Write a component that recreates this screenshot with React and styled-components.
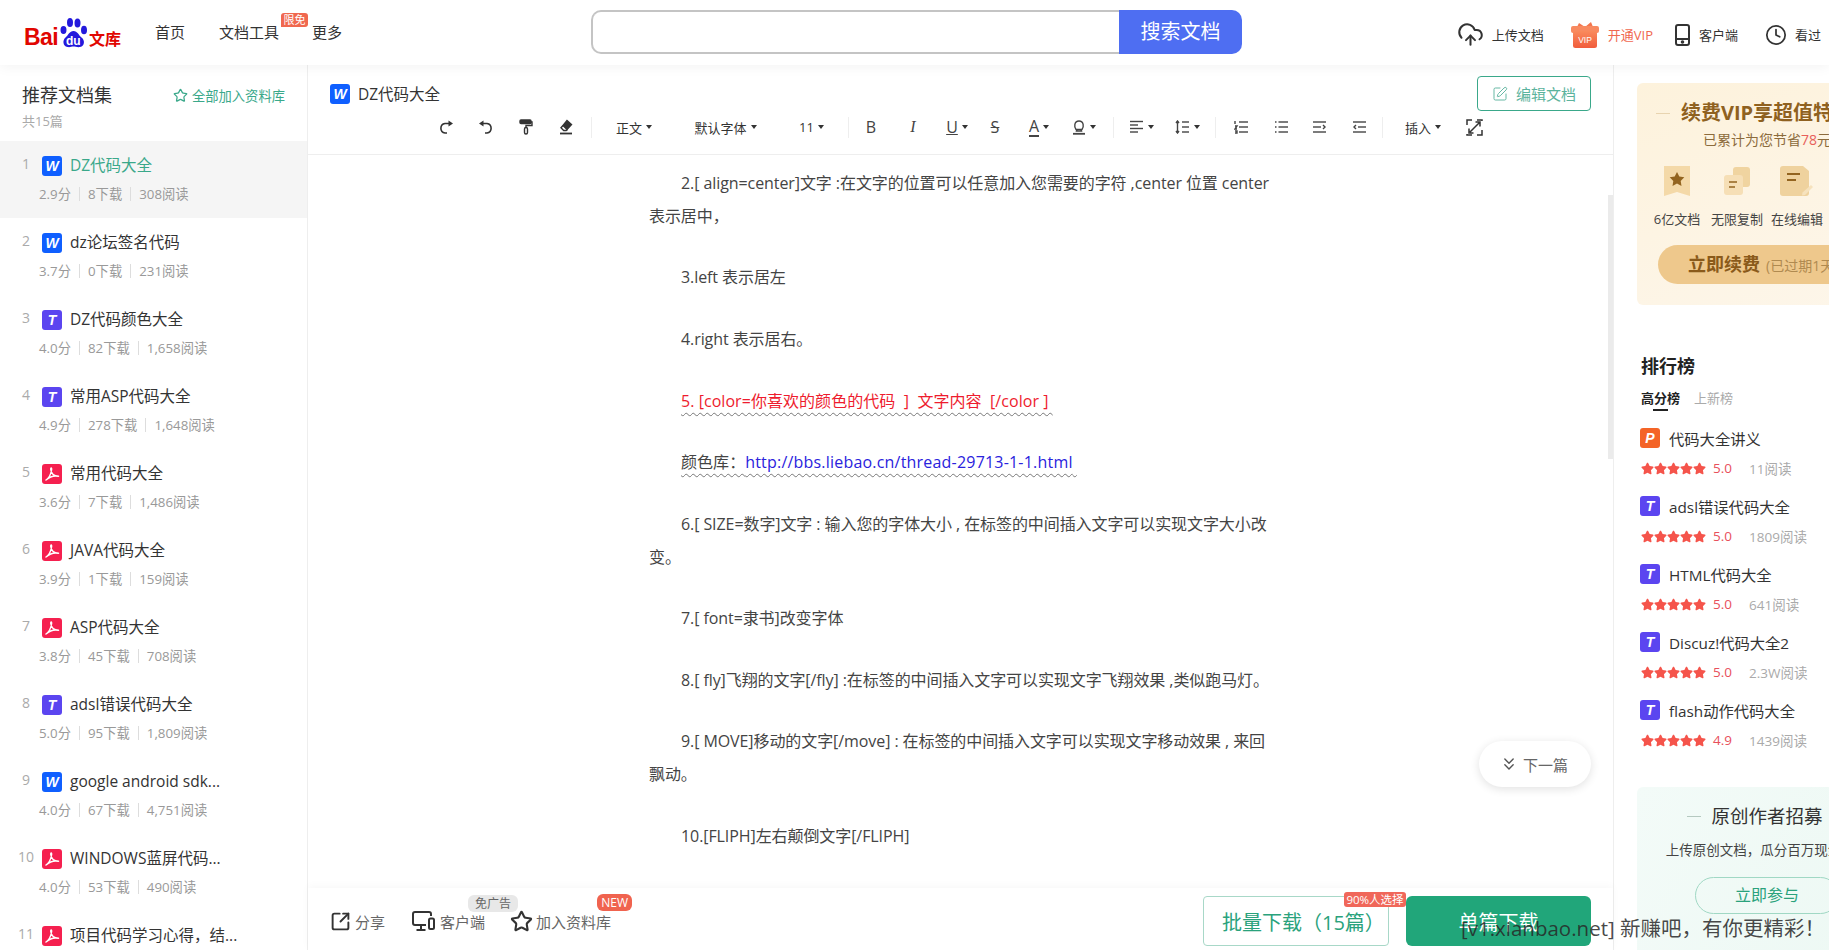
import React from "react";
import styled, { createGlobalStyle } from "styled-components";
import { ChevronsDown, Clock, CloudUpload, SquareArrowOutUpRight, SquarePen, Star } from "lucide-react";
import { FaStar } from "react-icons/fa";

const FONT = `"Open Sans", "Noto Sans CJK SC", sans-serif`;

const GlobalStyle = createGlobalStyle`
  html, body {
    margin: 0;
    padding: 0;
    background: #fff;
    overflow: hidden;
  }
  body {
    font-family: ${FONT};
    color: #333;
  }
`;

const Page = styled.div`
  position: relative;
  width: 1829px;
  height: 950px;
  display: flex;
  flex-direction: column;
  overflow: hidden;
`;

/* ---------- top header ---------- */

const Header = styled.header`
  height: 65px;
  flex-shrink: 0;
  box-sizing: border-box;
  padding-bottom: 2px;
  display: flex;
  align-items: center;
  position: relative;
  z-index: 2;
  background: #fff;
  box-shadow: 0 2px 12px rgba(0, 0, 0, 0.05);
`;

const HeaderLeft = styled.div`
  width: 591px;
  flex-shrink: 0;
  display: flex;
  align-items: center;
  padding-left: 24px;
  box-sizing: border-box;
`;

const Logo = styled.div`
  width: 131px;
  height: 34px;
  display: flex;
  align-items: flex-end;
`;

const LogoLatin = styled.span`
  font-family: "Liberation Sans", sans-serif;
  font-weight: 700;
  font-size: 23px;
  line-height: 23px;
  color: #e10601;
  letter-spacing: -0.6px;
`;

const LogoCjk = styled.span`
  font-weight: 700;
  font-size: 16px;
  line-height: 20px;
  color: #e10601;
  margin-left: 1px;
`;

const PawWrap = styled.span`
  position: relative;
  width: 29px;
  height: 32px;
  margin-left: 1px;
`;

const PawText = styled.span`
  position: absolute;
  left: 7px;
  bottom: 2px;
  font-family: "Liberation Sans", sans-serif;
  font-weight: 700;
  font-size: 12px;
  line-height: 12px;
  color: #fff;
`;

const Nav = styled.nav`
  display: flex;
  align-items: center;
`;

const NavLink = styled.a`
  position: relative;
  font-size: 15px;
  color: #333;
  margin-right: ${(p) => p.$gap}px;
`;

const LimitBadge = styled.span`
  position: absolute;
  top: -8px;
  right: -29px;
  width: 27px;
  height: 14px;
  border-radius: 3px 3px 3px 0;
  background: #f0684f;
  color: #fff;
  font-size: 11px;
  line-height: 14px;
  text-align: center;
`;

const SearchBox = styled.div`
  width: 651px;
  height: 44px;
  flex-shrink: 0;
  display: flex;
  box-sizing: border-box;
`;

const SearchInput = styled.div`
  flex: 1;
  border: 2px solid #c4c4c4;
  border-right: 0;
  border-radius: 10px 0 0 10px;
`;

const SearchButton = styled.div`
  width: 123px;
  background: #4e6ef2;
  color: #fff;
  font-size: 20px;
  line-height: 44px;
  text-align: center;
  border-radius: 0 10px 10px 0;
`;

const HeaderRight = styled.div`
  margin-left: auto;
  display: flex;
  align-items: center;
  padding: 6px 8px 0 0;
`;

const HeaderAction = styled.a`
  display: flex;
  align-items: center;
  gap: ${(p) => p.$gap}px;
  margin-left: ${(p) => p.$left}px;
  font-size: 13px;
  color: ${(p) => p.$color || "#333"};
`;

/* ---------- body columns ---------- */

const Columns = styled.div`
  flex: 1;
  min-height: 0;
  display: flex;
`;

const Sidebar = styled.aside`
  width: 308px;
  flex-shrink: 0;
  box-sizing: border-box;
  border-right: 1px solid #eee;
  overflow: hidden;
`;

const SidebarHead = styled.div`
  padding: 18px 22px 11px;
`;

const SidebarTop = styled.div`
  display: flex;
  align-items: center;
  justify-content: space-between;
`;

const SidebarTitle = styled.h2`
  margin: 0;
  font-size: 18px;
  line-height: 24px;
  font-weight: 400;
  color: #333;
`;

const AddAll = styled.a`
  display: flex;
  align-items: center;
  gap: 4px;
  font-size: 13.3px;
  color: #3aa88a;
`;

const Count = styled.div`
  margin-top: 5px;
  font-size: 13px;
  line-height: 18px;
  color: #aaa;
`;

const DocRow = styled.div`
  height: 77px;
  box-sizing: border-box;
  padding-top: 15px;
  background: ${(p) => (p.$active ? "#f5f5f5" : "transparent")};
`;

const DocTitleRow = styled.div`
  display: flex;
  align-items: center;
  height: 20px;
  padding-left: 10px;
`;

const DocNum = styled.span`
  width: 32px;
  text-align: center;
  font-size: 14px;
  line-height: 16px;
  margin-top: -4px;
  color: #aaa;
`;

const DocName = styled.span`
  margin: -3px 0 0 8px;
  font-size: 15.5px;
  white-space: nowrap;
  color: ${(p) => (p.$active ? "#3aa88a" : "#333")};
`;

const DocMeta = styled.div`
  display: flex;
  align-items: center;
  gap: 8px;
  margin-top: 9px;
  padding-left: 39px;
  font-size: 13.3px;
  line-height: 18px;
  color: #999;
`;

const MetaSep = styled.i`
  width: 1px;
  height: 14px;
  background: #ddd;
`;

const FileBadge = styled.span`
  width: 20px;
  height: 20px;
  flex-shrink: 0;
  border-radius: 3px;
  background: ${(p) => p.$bg};
  color: #fff;
  display: flex;
  align-items: center;
  justify-content: center;
  font-family: "Liberation Sans", sans-serif;
  font-style: italic;
  font-weight: 700;
  font-size: 14px;
`;

/* ---------- main doc column ---------- */

const Main = styled.main`
  flex: 1;
  min-width: 0;
  display: flex;
  flex-direction: column;
  position: relative;
  border-right: 1px solid #eee;
`;

const MainHead = styled.div`
  height: 90px;
  flex-shrink: 0;
  box-sizing: border-box;
  padding-top: 11px;
  border-bottom: 1px solid #eee;
`;

const TitleBar = styled.div`
  height: 35px;
  display: flex;
  align-items: center;
  padding: 0 22px;
  gap: 8px;
  font-size: 15.5px;
  color: #333;
`;

const EditButton = styled.a`
  margin-left: auto;
  width: 114px;
  height: 35px;
  box-sizing: border-box;
  border: 1px solid #3aa88a;
  border-radius: 4px;
  display: flex;
  align-items: center;
  justify-content: center;
  gap: 8px;
  font-size: 15px;
  color: #5bb39d;
`;

const Toolbar = styled.div`
  height: 32px;
  display: flex;
  align-items: center;
  justify-content: center;
  padding-right: 10px;
`;

const Tool = styled.span`
  width: ${(p) => p.$w}px;
  height: 24px;
  flex-shrink: 0;
  display: flex;
  align-items: center;
  justify-content: center;
  gap: 4px;
  font-size: 13px;
  color: #333;
`;

const ToolSep = styled.i`
  width: 1px;
  height: 21px;
  flex-shrink: 0;
  background: #eee;
  margin-left: ${(p) => p.$m || 0}px;
`;

const Caret = styled.i`
  width: 0;
  height: 0;
  border-left: 3.5px solid transparent;
  border-right: 3.5px solid transparent;
  border-top: 4px solid #333;
`;

const Glyph = styled.span`
  font-family: ${(p) => p.$font || `"Open Sans", sans-serif`};
  font-style: ${(p) => (p.$italic ? "italic" : "normal")};
  font-size: 16px;
  line-height: 18px;
  color: #444;
  text-decoration: ${(p) => p.$deco || "none"};
  border-bottom: ${(p) => (p.$bar ? "2px solid #444" : "0")};
`;

const Reader = styled.div`
  flex: 1;
  min-height: 0;
  overflow: hidden;
  position: relative;
`;

const Article = styled.article`
  width: 630px;
  margin-left: 341px;
  padding-top: 12px;
  font-size: 16px;
  line-height: 32.8px;
  letter-spacing: -0.08px;
  color: #444;
`;

const Para = styled.p`
  margin: 0 0 28.8px;
  text-indent: 32px;
  white-space: pre;
`;

const Wavy = styled.span`
  text-decoration: underline wavy #777 1px;
  text-underline-offset: 5px;
  letter-spacing: 0.05px;
  color: ${(p) => p.$color || "inherit"};
`;

const LinkText = styled.span`
  color: #2a22dd;
  letter-spacing: 0.2px;
`;

const ScrollThumb = styled.i`
  position: absolute;
  top: 40px;
  right: 0;
  width: 5px;
  height: 264px;
  background: #ebebeb;
`;

const NextPill = styled.a`
  position: absolute;
  right: 22px;
  bottom: 101px;
  width: 112px;
  height: 46px;
  box-sizing: border-box;
  padding-right: 3px;
  border-radius: 23px;
  background: #fff;
  box-shadow: 0 2px 10px rgba(0, 0, 0, 0.12);
  display: flex;
  align-items: center;
  justify-content: center;
  gap: 4px;
  font-size: 15px;
  color: #666;
`;

const BottomBar = styled.div`
  height: 62px;
  flex-shrink: 0;
  display: flex;
  align-items: center;
  padding: 4px 22px 0;
  box-sizing: border-box;
  background: #fff;
  box-shadow: 0 -2px 8px rgba(0, 0, 0, 0.03);
  position: relative;
`;

const BarAction = styled.a`
  position: relative;
  display: flex;
  align-items: center;
  gap: ${(p) => p.$gap}px;
  margin-right: ${(p) => p.$right}px;
  font-size: 15px;
  color: #666;
`;

const BarBadge = styled.span`
  position: absolute;
  top: -16px;
  right: ${(p) => p.$right}px;
  height: 17px;
  padding: 0 ${(p) => p.$pad}px;
  border-radius: 6px;
  background: ${(p) => p.$bg};
  color: ${(p) => p.$color};
  font-size: 12px;
  line-height: 17px;
  white-space: nowrap;
`;

const Downloads = styled.div`
  margin-left: auto;
  display: flex;
  gap: 17px;
  position: relative;
`;

const BatchButton = styled.a`
  width: 186px;
  height: 50px;
  box-sizing: border-box;
  border: 1px solid #a8d8c8;
  border-radius: 4px;
  padding-left: 18px;
  color: #2aa27c;
  font-size: 20px;
  line-height: 51px;
  white-space: nowrap;
`;

const SingleButton = styled.a`
  width: 185px;
  height: 50px;
  border-radius: 6px;
  background: #21a67a;
  color: #fff;
  font-size: 20px;
  line-height: 53px;
  text-align: center;
`;

const PickBadge = styled.span`
  position: absolute;
  top: -4px;
  left: 141px;
  width: 62px;
  height: 15px;
  border-radius: 3px;
  background: #f0675a;
  color: #fff;
  font-size: 11.5px;
  line-height: 15px;
  text-align: center;
  white-space: nowrap;
`;

/* ---------- right column ---------- */

const RightCol = styled.aside`
  width: 215px;
  flex-shrink: 0;
  overflow: hidden;
  padding: 18px 0 0 23px;
  box-sizing: border-box;
`;

const PromoCard = styled.section`
  width: 260px;
  height: 222px;
  box-sizing: border-box;
  border-radius: 6px;
  background: linear-gradient(160deg, #fdf2dc, #fdf6ea);
  padding-top: 15px;
  text-align: center;
`;

const PromoTitle = styled.h3`
  margin: 0;
  display: flex;
  align-items: center;
  justify-content: center;
  gap: 11px;
  font-size: 20px;
  line-height: 30px;
  font-weight: 700;
  color: #8f6120;
  white-space: nowrap;
`;

const Dash = styled.i`
  width: 14px;
  height: 1px;
  flex-shrink: 0;
  background: ${(p) => p.$color};
`;

const PromoSub = styled.div`
  margin-top: 2px;
  font-size: 14px;
  line-height: 20px;
  color: #8c6b3c;
  white-space: nowrap;
`;

const Saved = styled.span`
  color: #e8605a;
`;

const Perks = styled.div`
  display: grid;
  grid-template-columns: repeat(4, 60px);
  justify-content: center;
  margin-top: 15px;
`;

const Perk = styled.div`
  display: flex;
  flex-direction: column;
  align-items: center;
  gap: 12px;
  font-size: 13px;
  line-height: 20px;
  color: #444;
  white-space: nowrap;
`;

const RenewButton = styled.a`
  display: block;
  margin: 16px 0 0 21px;
  width: 218px;
  height: 39px;
  border-radius: 20px;
  background: #eec88c;
  text-align: left;
  padding-left: 30px;
  box-sizing: border-box;
  font-size: 18px;
  line-height: 39px;
  font-weight: 700;
  color: #8a5a1a;
  white-space: nowrap;
`;

const RenewNote = styled.span`
  margin-left: 6px;
  font-size: 14px;
  font-weight: 400;
  color: #b08a50;
`;

const Ranking = styled.section`
  padding: 49px 0 0 4px;
`;

const RankTitle = styled.h3`
  margin: 0;
  font-size: 18px;
  line-height: 24px;
  font-weight: 700;
  color: #222;
`;

const RankTabs = styled.div`
  display: flex;
  gap: 14px;
  margin-top: 10px;
  height: 40px;
`;

const RankTab = styled.span`
  position: relative;
  height: 20px;
  font-size: 13px;
  line-height: 20px;
  font-weight: ${(p) => (p.$on ? 700 : 400)};
  color: ${(p) => (p.$on ? "#222" : "#aaa")};
  &::after {
    content: "";
    display: ${(p) => (p.$on ? "block" : "none")};
    position: absolute;
    left: 12px;
    bottom: -3px;
    width: 15px;
    height: 2px;
    background: #222;
  }
`;

const RankItem = styled.div`
  height: 68px;
`;

const RankName = styled.div`
  display: flex;
  align-items: center;
  gap: 9px;
  height: 20px;
  margin-left: -1px;
  font-size: 15.3px;
  color: #333;
  white-space: nowrap;
`;

const RankStats = styled.div`
  display: flex;
  align-items: center;
  margin-top: 11px;
  height: 18px;
  font-size: 13.5px;
  white-space: nowrap;
`;

const Stars = styled.span`
  display: flex;
  width: 72px;
  color: #f5544b;
`;

const Score = styled.span`
  width: 36px;
  color: #e8505b;
`;

const Reads = styled.span`
  color: #aaa;
`;

const AuthorCard = styled.section`
  width: 260px;
  height: 200px;
  margin-top: 19px;
  box-sizing: border-box;
  border-radius: 6px;
  background: linear-gradient(120deg, #f3fbf8, #ecf8f3);
  padding-top: 14px;
  text-align: center;
`;

const AuthorTitle = styled.h3`
  margin: 0;
  display: flex;
  align-items: center;
  justify-content: center;
  gap: 10px;
  font-size: 18.5px;
  line-height: 30px;
  font-weight: 400;
  color: #333;
`;

const AuthorSub = styled.div`
  margin-top: 9px;
  font-size: 13.5px;
  line-height: 20px;
  color: #444;
  white-space: nowrap;
`;

const JoinButton = styled.a`
  display: block;
  margin: 17px auto 0;
  width: 144px;
  height: 37px;
  box-sizing: border-box;
  border: 1px solid #a0d8c4;
  border-radius: 19px;
  color: #2aa27c;
  font-size: 16px;
  line-height: 35px;
`;

const Watermark = styled.div`
  position: absolute;
  left: 1461px;
  top: 914px;
  font-size: 20.5px;
  line-height: 28px;
  color: rgba(40, 40, 40, 0.85);
  white-space: nowrap;
`;

/* ---------- drawings ---------- */

const PdfMark = () => (
  <svg width="16" height="16" viewBox="0 0 16 16" fill="none" stroke="#fff" strokeWidth="1.5">
    <path d="M2 14c3-2 5-6 5.6-10.5C7.8 1.500 6.600 1.700 6.800 3.500 7.200 7 10 10 14.500 10.300 11 9.500 6 10.500 2 14z" strokeLinejoin="round" />
  </svg>
);

const FileIcon = ({ type }) => {
  if (type === "w") return <FileBadge $bg="#0f5fff">W</FileBadge>;
  if (type === "t") return <FileBadge $bg="#5b45f0">T</FileBadge>;
  if (type === "p") return <FileBadge $bg="#f46427">P</FileBadge>;
  return (
    <FileBadge $bg="#f5204f">
      <PdfMark />
    </FileBadge>
  );
};

const BaiduLogo = () => (
  <Logo>
    <LogoLatin>Bai</LogoLatin>
    <PawWrap>
      <svg width="29" height="32" viewBox="0 0 29 32" fill="#2319dc">
        <ellipse cx="4.500" cy="13" rx="3" ry="4" />
        <ellipse cx="11" cy="5.500" rx="3" ry="4.500" />
        <ellipse cx="18.500" cy="6" rx="3" ry="4.500" />
        <ellipse cx="25" cy="13" rx="3" ry="4.300" />
        <path d="M14.500 14c-4 0-5 4-8 6.500-3 2.500-3 8.500 2 9.500 2.500.5 4-.5 6-.5s4 1 6.500.5c5-1 5-7 1.500-9.500-3-2.500-4-6.500-8-6.500z" />
      </svg>
      <PawText>du</PawText>
    </PawWrap>
    <LogoCjk>文库</LogoCjk>
  </Logo>
);

const GiftIcon = () => (
  <svg width="28" height="27" viewBox="0 0 28 27">
    <defs>
      <linearGradient id="gift" x1="0" y1="0" x2="0" y2="1">
        <stop offset="0" stopColor="#f98a5c" />
        <stop offset="1" stopColor="#f15c3c" />
      </linearGradient>
    </defs>
    <path d="M8 2l6 4 6-5 2 5h-16z" fill="#f4764e" />
    <rect x="0" y="5" width="28" height="7" rx="2" fill="#f88a60" />
    <rect x="2" y="10" width="24" height="17" rx="2.500" fill="url(#gift)" />
    <text x="14" y="22" textAnchor="middle" fontFamily="Liberation Sans" fontSize="8.500" fill="#fff">VIP</text>
  </svg>
);

const PhoneIcon = () => (
  <svg width="15" height="22" viewBox="0 0 15 22" fill="none" stroke="#333" strokeWidth="2">
    <rect x="1" y="1" width="13" height="20" rx="2" />
    <path d="M1 15h13" />
    <circle cx="7.500" cy="18" r="0.800" fill="#333" />
  </svg>
);

const RedoIcon = () => (
  <svg width="16" height="16" viewBox="0 0 16 16" fill="none" stroke="#333" strokeWidth="1.600">
    <path d="M11 4.500H7a4.800 4.800 0 0 0 0 9.500h2" />
    <path d="M10.500 1.500l4.500 3-4.500 3z" fill="#333" stroke="none" />
  </svg>
);

const UndoIcon = () => (
  <svg width="16" height="16" viewBox="0 0 16 16" fill="none" stroke="#333" strokeWidth="1.600">
    <path d="M5 4.500h4a4.800 4.800 0 0 1 0 9.500H7" />
    <path d="M5.500 1.500L1 4.500l4.500 3z" fill="#333" stroke="none" />
  </svg>
);

const RollerIcon = () => (
  <svg width="14" height="16" viewBox="0 0 14 16" fill="none" stroke="#333" strokeWidth="1.400">
    <rect x="1" y="1" width="11" height="3.500" rx="1" fill="#333" />
    <path d="M12 3h1v3.500H7v2" />
    <rect x="5.500" y="8.500" width="3" height="6.500" rx="1.500" />
  </svg>
);

const EraserIcon = () => (
  <svg width="16" height="16" viewBox="0 0 16 16" fill="none" stroke="#333" strokeWidth="1.400">
    <path d="M9 1.500l4.500 4-4.500 5-4-4z" fill="#333" />
    <path d="M5 6.500l-2 2.300 2.700 2.700h2.500l1.300-1" />
    <path d="M2 14.500h12" strokeWidth="1.800" />
  </svg>
);

const HighlightIcon = () => (
  <svg width="14" height="16" viewBox="0 0 14 16" fill="none" stroke="#444" strokeWidth="1.400">
    <path d="M4 10.500C2 8 2 2 7 2s5 6 3 8.500z" />
    <path d="M5 10.500L4.500 12h5L9 10.500" />
    <path d="M1 14.800h12" strokeWidth="1.800" />
  </svg>
);

const Lines = ({ rows }) => (
  <svg width="15" height="14" viewBox="0 0 15 14" fill="none" stroke="#444" strokeWidth="1.400">
    {rows.map((r, i) => (
      <path key={i} d={r} />
    ))}
  </svg>
);

const FullIcon = () => (
  <svg width="17" height="17" viewBox="0 0 17 17" fill="none" stroke="#333" strokeWidth="1.500">
    <path d="M1 6V1h5M11 1h5v1M16 11v5h-5M6 16H1v-1" />
    <path d="M4 13L13.500 3.500M9.500 3h4.500v4.500M3 9.500V14h4.500" />
  </svg>
);

const DeviceIcon = () => (
  <svg width="23" height="20" viewBox="0 0 23 20" fill="none" stroke="#333" strokeWidth="2">
    <path d="M14 14H3a2 2 0 0 1-2-2V3a2 2 0 0 1 2-2h14a2 2 0 0 1 2 2v2" />
    <path d="M9 14v4M4.500 19h9" />
    <rect x="17" y="7.500" width="5" height="10.500" rx="1.500" />
  </svg>
);

const BookmarkPerk = () => (
  <svg width="28" height="32" viewBox="0 0 28 32">
    <path d="M1 1h26v30l-13-4-13 4z" fill="#f4d9a8" />
    <path d="M14 7l2.300 4.600 5 .7-3.600 3.600.8 5-4.500-2.400-4.500 2.400.8-5-3.600-3.600 5-.7z" fill="#93641f" />
  </svg>
);

const CopyPerk = () => (
  <svg width="28" height="32" viewBox="0 0 28 32">
    <rect x="10" y="2" width="17" height="20" rx="3" fill="#f0d4a0" />
    <rect x="1" y="10" width="19" height="20" rx="3" fill="#f6dfb6" />
    <path d="M6 17h8M6 22h6" stroke="#93641f" strokeWidth="1.600" />
  </svg>
);

const NotePerk = () => (
  <svg width="34" height="32" viewBox="0 0 34 32">
    <path d="M3 1h20l6 5v22a3 3 0 0 1-3 3H3a3 3 0 0 1-3-3V4a3 3 0 0 1 3-3z" fill="#efd29e" />
    <path d="M7 9h13M7 15h9" stroke="#93641f" strokeWidth="2" />
    <path d="M31 20l2 2-8 8-3 .5.5-3z" fill="#f6e2bd" />
  </svg>
);

/* ---------- data ---------- */

const docs = [
  ["w", "DZ代码大全", "2.9分", "8下载", "308阅读"],
  ["w", "dz论坛签名代码", "3.7分", "0下载", "231阅读"],
  ["t", "DZ代码颜色大全", "4.0分", "82下载", "1,658阅读"],
  ["t", "常用ASP代码大全", "4.9分", "278下载", "1,648阅读"],
  ["pdf", "常用代码大全", "3.6分", "7下载", "1,486阅读"],
  ["pdf", "JAVA代码大全", "3.9分", "1下载", "159阅读"],
  ["pdf", "ASP代码大全", "3.8分", "45下载", "708阅读"],
  ["t", "adsl错误代码大全", "5.0分", "95下载", "1,809阅读"],
  ["w", "google android sdk...", "4.0分", "67下载", "4,751阅读"],
  ["pdf", "WINDOWS蓝屏代码...", "4.0分", "53下载", "490阅读"],
  ["pdf", "项目代码学习心得，结...", "4.4分", "3下载", "326阅读"],
];

const ranks = [
  ["p", "代码大全讲义", "5.0", "11阅读"],
  ["t", "adsl错误代码大全", "5.0", "1809阅读"],
  ["t", "HTML代码大全", "5.0", "641阅读"],
  ["t", "Discuz!代码大全2", "5.0", "2.3W阅读"],
  ["t", "flash动作代码大全", "4.9", "1439阅读"],
];

export default function App() {
  return (
    <Page>
      <GlobalStyle />
      <Header>
        <HeaderLeft>
          <BaiduLogo />
          <Nav>
            <NavLink $gap={34}>首页</NavLink>
            <NavLink $gap={33}>
              文档工具
              <LimitBadge>限免</LimitBadge>
            </NavLink>
            <NavLink $gap={0}>更多</NavLink>
          </Nav>
        </HeaderLeft>
        <SearchBox>
          <SearchInput />
          <SearchButton>搜索文档</SearchButton>
        </SearchBox>
        <HeaderRight>
          <HeaderAction $gap={8}>
            <CloudUpload size={27} strokeWidth={1.8} color="#333" />
            上传文档
          </HeaderAction>
          <HeaderAction $gap={9} $left={27} $color="#f0674f">
            <GiftIcon />
            开通VIP
          </HeaderAction>
          <HeaderAction $gap={9} $left={22}>
            <PhoneIcon />
            客户端
          </HeaderAction>
          <HeaderAction $gap={8} $left={27}>
            <Clock size={22} strokeWidth={1.9} color="#333" />
            看过
          </HeaderAction>
        </HeaderRight>
      </Header>

      <Columns>
        <Sidebar>
          <SidebarHead>
            <SidebarTop>
              <SidebarTitle>推荐文档集</SidebarTitle>
              <AddAll>
                <Star size={15} strokeWidth={2} color="#3aa88a" />
                全部加入资料库
              </AddAll>
            </SidebarTop>
            <Count>共15篇</Count>
          </SidebarHead>
          {docs.map(([type, name, score, down, read], i) => (
            <DocRow key={name} $active={i === 0}>
              <DocTitleRow>
                <DocNum>{i + 1}</DocNum>
                <FileIcon type={type} />
                <DocName $active={i === 0}>{name}</DocName>
              </DocTitleRow>
              <DocMeta>
                {score}
                <MetaSep />
                {down}
                <MetaSep />
                {read}
              </DocMeta>
            </DocRow>
          ))}
        </Sidebar>

        <Main>
          <MainHead>
            <TitleBar>
              <FileIcon type="w" />
              DZ代码大全
              <EditButton>
                <SquarePen size={16} strokeWidth={1.400} color="#5bb39d" />
                编辑文档
              </EditButton>
            </TitleBar>
            <Toolbar>
              <Tool $w={40}><RedoIcon /></Tool>
              <Tool $w={40}><UndoIcon /></Tool>
              <Tool $w={40}><RollerIcon /></Tool>
              <Tool $w={40}><EraserIcon /></Tool>
              <ToolSep $m={5} />
              <Tool $w={84}>正文<Caret /></Tool>
              <Tool $w={99}>默认字体<Caret /></Tool>
              <Tool $w={73}>11<Caret /></Tool>
              <ToolSep />
              <Tool $w={44}><Glyph>B</Glyph></Tool>
              <Tool $w={40}><Glyph $font={`"Liberation Serif", serif`} $italic>I</Glyph></Tool>
              <Tool $w={48}><Glyph $deco="underline">U</Glyph><Caret /></Tool>
              <Tool $w={28}><Glyph $deco="line-through">S</Glyph></Tool>
              <Tool $w={60}><Glyph $bar>A</Glyph><Caret /></Tool>
              <Tool $w={30}><HighlightIcon /><Caret /></Tool>
              <ToolSep $m={14} />
              <Tool $w={54}>
                <Lines rows={["M1 1.500h13", "M1 5h8", "M1 8.500h13", "M1 12h8"]} />
                <Caret />
              </Tool>
              <Tool $w={38}>
                <Lines rows={["M2.500 1v12", "M1 3l1.500-2L4 3", "M1 11l1.500 2L4 11", "M7 2h7", "M7 7h7", "M7 12h7"]} />
                <Caret />
              </Tool>
              <ToolSep $m={9} />
              <Tool $w={50}><Lines rows={["M1 1v3", "M1 6h2L1 9h2", "M1 11h2v2H1", "M5 2h9", "M5 7h9", "M5 12h9"]} /></Tool>
              <Tool $w={30}><Lines rows={["M1 2h1.500", "M1 7h1.500", "M1 12h1.500", "M4.500 2h9.500", "M4.500 7h9.500", "M4.500 12h9.500"]} /></Tool>
              <Tool $w={46}><Lines rows={["M1 2h13", "M1 7h8", "M1 12h13", "M11 5l2 2-2 2"]} /></Tool>
              <Tool $w={34}><Lines rows={["M1 2h13", "M6 7h8", "M1 12h13", "M4 5L2 7l2 2"]} /></Tool>
              <ToolSep $m={6} />
              <Tool $w={80}>插入<Caret /></Tool>
              <Tool $w={22}><FullIcon /></Tool>
            </Toolbar>
          </MainHead>

          <Reader>
            <Article>
              <Para>
                2.[ align=center]文字 :在文字的位置可以任意加入您需要的字符 ,center 位置 center
                <br />
                表示居中，
              </Para>
              <Para>3.left 表示居左</Para>
              <Para>4.right 表示居右。</Para>
              <Para>
                <Wavy $color="#ee1c2e">5. [color=你喜欢的颜色的代码  ]  文字内容  [/color ] </Wavy>
              </Para>
              <Para>
                <Wavy>
                  颜色库：<LinkText>http://bbs.liebao.cn/thread-29713-1-1.html</LinkText>{" "}
                </Wavy>
              </Para>
              <Para>
                6.[ SIZE=数字]文字 : 输入您的字体大小 , 在标签的中间插入文字可以实现文字大小改
                <br />
                变。
              </Para>
              <Para>7.[ font=隶书]改变字体</Para>
              <Para>8.[ fly]飞翔的文字[/fly] :在标签的中间插入文字可以实现文字飞翔效果 ,类似跑马灯。</Para>
              <Para>
                9.[ MOVE]移动的文字[/move] : 在标签的中间插入文字可以实现文字移动效果 , 来回
                <br />
                飘动。
              </Para>
              <Para>10.[FLIPH]左右颠倒文字[/FLIPH]</Para>
              <Para>11.[ FLIPV]上下颠倒文字[/FLIPV]</Para>
            </Article>
            <ScrollThumb />
            <NextPill>
              <ChevronsDown size={20} strokeWidth={1.700} color="#555" />
              下一篇
            </NextPill>
          </Reader>

          <BottomBar>
            <BarAction $gap={4} $right={27}>
              <SquareArrowOutUpRight size={21} strokeWidth={2.200} color="#333" />
              分享
            </BarAction>
            <BarAction $gap={5} $right={25}>
              <DeviceIcon />
              客户端
              <BarBadge $right={-33} $pad={7} $bg="#e8e8e8" $color="#666">免广告</BarBadge>
            </BarAction>
            <BarAction $gap={3} $right={0}>
              <Star size={23} strokeWidth={2.200} color="#333" />
              加入资料库
              <BarBadge $right={-21} $pad={4} $bg="#f0634f" $color="#fff">NEW</BarBadge>
            </BarAction>
            <Downloads>
              <BatchButton>批量下载（15篇）</BatchButton>
              <SingleButton>单篇下载</SingleButton>
              <PickBadge>90%人选择</PickBadge>
            </Downloads>
          </BottomBar>
        </Main>

        <RightCol>
          <PromoCard>
            <PromoTitle>
              <Dash $color="#e8d4b0" />
              续费VIP享超值特权
              <Dash $color="transparent" />
            </PromoTitle>
            <PromoSub>
              已累计为您节省<Saved>78</Saved>元
            </PromoSub>
            <Perks>
              <Perk>
                <BookmarkPerk />
                6亿文档
              </Perk>
              <Perk>
                <CopyPerk />
                无限复制
              </Perk>
              <Perk>
                <NotePerk />
                在线编辑
              </Perk>
            </Perks>
            <RenewButton>
              立即续费<RenewNote>(已过期1天)</RenewNote>
            </RenewButton>
          </PromoCard>

          <Ranking>
            <RankTitle>排行榜</RankTitle>
            <RankTabs>
              <RankTab $on>高分榜</RankTab>
              <RankTab>上新榜</RankTab>
            </RankTabs>
            {ranks.map(([type, name, score, reads]) => (
              <RankItem key={name}>
                <RankName>
                  <FileIcon type={type} />
                  {name}
                </RankName>
                <RankStats>
                  <Stars>
                    {[0, 1, 2, 3, 4].map((n) => (
                      <FaStar key={n} size={13} />
                    ))}
                  </Stars>
                  <Score>{score}</Score>
                  <Reads>{reads}</Reads>
                </RankStats>
              </RankItem>
            ))}
          </Ranking>

          <AuthorCard>
            <AuthorTitle>
              <Dash $color="#b5c9c0" />
              原创作者招募
              <Dash $color="transparent" />
            </AuthorTitle>
            <AuthorSub>上传原创文档，瓜分百万现金奖励</AuthorSub>
            <JoinButton>立即参与</JoinButton>
          </AuthorCard>
        </RightCol>
      </Columns>

      <Watermark>[v1.xianbao.net] 新赚吧，有你更精彩！</Watermark>
    </Page>
  );
}
